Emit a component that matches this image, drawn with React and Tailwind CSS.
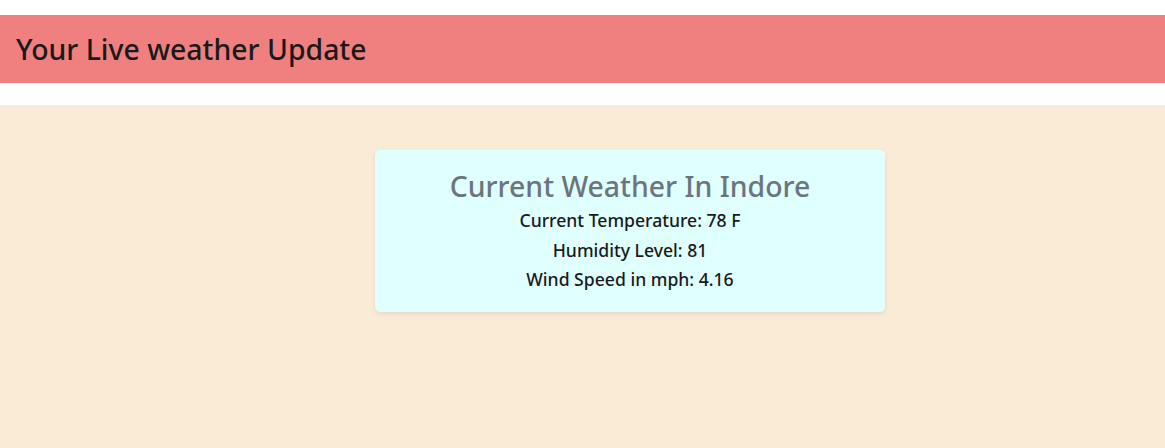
export default function App() {
  return (
    <div className="min-h-[448px] bg-white font-['Noto_Sans',sans-serif]">
      <div className="h-[15px]" />
      <header className="flex h-[68px] items-center bg-[#f08080] px-4">
        <h1 className="text-[28.4px] font-medium text-[#1a1a1a]">Your Live weather Update</h1>
      </header>
      <div className="h-[22px]" />
      <main className="min-h-[343px] bg-[#faebd7] pt-[45px] pl-[375px]">
        <div className="h-[162px] w-[510px] rounded-[5px] bg-[#e0ffff] pt-[16px] text-center shadow-[0_2px_4px_rgba(0,0,0,0.08)]">
          <h2 className="text-[28.4px] leading-[40px] font-medium text-[#6c757d]">Current Weather In Indore</h2>
          <p className="text-[17.6px] leading-[29.5px] font-medium text-[#1a1a1a]">Current Temperature: 78 F</p>
          <p className="text-[17.6px] leading-[29.5px] font-medium text-[#1a1a1a]">Humidity Level: 81</p>
          <p className="text-[17.6px] leading-[29.5px] font-medium text-[#1a1a1a]">Wind Speed in mph: 4.16</p>
        </div>
      </main>
    </div>
  );
}
